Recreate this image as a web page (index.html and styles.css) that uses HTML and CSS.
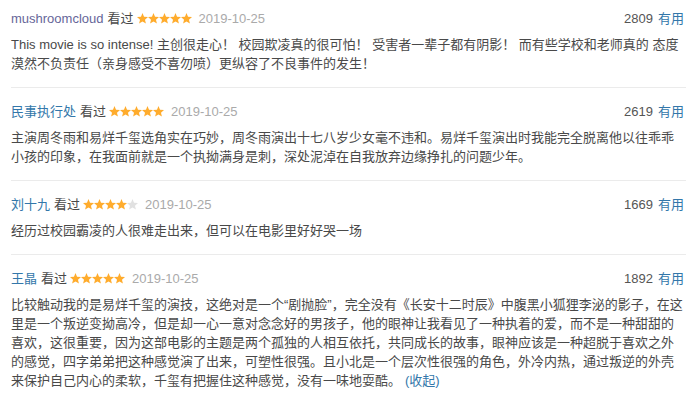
FILE: index.html
```html
<!DOCTYPE html>
<html lang="zh-CN">
<head>
<meta charset="utf-8">
<title>短评</title>
<link rel="stylesheet" href="styles.css">
</head>
<body>
<div class="comments">
  <div class="comment">
    <div class="head">
      <div class="info">
        <a class="user visited" href="#">mushroomcloud</a>
        <span class="watched">看过</span>
        <svg class="stars" width="55" height="11" viewBox="0 0 55 11">
          <polygon class="on" points="5.5,0.1 7.03,3.8 11,4.11 7.97,6.7 8.91,10.59 5.5,8.5 2.09,10.59 3.03,6.7 0,4.11 3.97,3.8"/>
          <polygon class="on" transform="translate(11 0)" points="5.5,0.1 7.03,3.8 11,4.11 7.97,6.7 8.91,10.59 5.5,8.5 2.09,10.59 3.03,6.7 0,4.11 3.97,3.8"/>
          <polygon class="on" transform="translate(22 0)" points="5.5,0.1 7.03,3.8 11,4.11 7.97,6.7 8.91,10.59 5.5,8.5 2.09,10.59 3.03,6.7 0,4.11 3.97,3.8"/>
          <polygon class="on" transform="translate(33 0)" points="5.5,0.1 7.03,3.8 11,4.11 7.97,6.7 8.91,10.59 5.5,8.5 2.09,10.59 3.03,6.7 0,4.11 3.97,3.8"/>
          <polygon class="on" transform="translate(44 0)" points="5.5,0.1 7.03,3.8 11,4.11 7.97,6.7 8.91,10.59 5.5,8.5 2.09,10.59 3.03,6.7 0,4.11 3.97,3.8"/>
        </svg>
        <span class="time">2019-10-25</span>
      </div>
      <div class="votes"><span class="count">2809</span><a class="useful" href="#">有用</a></div>
    </div>
    <p class="text">This movie is so intense! 主创很走心！ 校园欺凌真的很可怕！ 受害者一辈子都有阴影！ 而有些学校和老师真的 态度漠然不负责任（亲身感受不喜勿喷）更纵容了不良事件的发生！</p>
  </div>

  <div class="comment">
    <div class="head">
      <div class="info">
        <a class="user" href="#">民事执行处</a>
        <span class="watched">看过</span>
        <svg class="stars" width="55" height="11" viewBox="0 0 55 11">
          <polygon class="on" points="5.5,0.1 7.03,3.8 11,4.11 7.97,6.7 8.91,10.59 5.5,8.5 2.09,10.59 3.03,6.7 0,4.11 3.97,3.8"/>
          <polygon class="on" transform="translate(11 0)" points="5.5,0.1 7.03,3.8 11,4.11 7.97,6.7 8.91,10.59 5.5,8.5 2.09,10.59 3.03,6.7 0,4.11 3.97,3.8"/>
          <polygon class="on" transform="translate(22 0)" points="5.5,0.1 7.03,3.8 11,4.11 7.97,6.7 8.91,10.59 5.5,8.5 2.09,10.59 3.03,6.7 0,4.11 3.97,3.8"/>
          <polygon class="on" transform="translate(33 0)" points="5.5,0.1 7.03,3.8 11,4.11 7.97,6.7 8.91,10.59 5.5,8.5 2.09,10.59 3.03,6.7 0,4.11 3.97,3.8"/>
          <polygon class="on" transform="translate(44 0)" points="5.5,0.1 7.03,3.8 11,4.11 7.97,6.7 8.91,10.59 5.5,8.5 2.09,10.59 3.03,6.7 0,4.11 3.97,3.8"/>
        </svg>
        <span class="time">2019-10-25</span>
      </div>
      <div class="votes"><span class="count">2619</span><a class="useful" href="#">有用</a></div>
    </div>
    <p class="text">主演周冬雨和易烊千玺选角实在巧妙，周冬雨演出十七八岁少女毫不违和。易烊千玺演出时我能完全脱离他以往乖乖小孩的印象，在我面前就是一个执拗满身是刺，深处泥淖在自我放弃边缘挣扎的问题少年。</p>
  </div>

  <div class="comment">
    <div class="head">
      <div class="info">
        <a class="user" href="#">刘十九</a>
        <span class="watched">看过</span>
        <svg class="stars" width="55" height="11" viewBox="0 0 55 11">
          <polygon class="on" points="5.5,0.1 7.03,3.8 11,4.11 7.97,6.7 8.91,10.59 5.5,8.5 2.09,10.59 3.03,6.7 0,4.11 3.97,3.8"/>
          <polygon class="on" transform="translate(11 0)" points="5.5,0.1 7.03,3.8 11,4.11 7.97,6.7 8.91,10.59 5.5,8.5 2.09,10.59 3.03,6.7 0,4.11 3.97,3.8"/>
          <polygon class="on" transform="translate(22 0)" points="5.5,0.1 7.03,3.8 11,4.11 7.97,6.7 8.91,10.59 5.5,8.5 2.09,10.59 3.03,6.7 0,4.11 3.97,3.8"/>
          <polygon class="on" transform="translate(33 0)" points="5.5,0.1 7.03,3.8 11,4.11 7.97,6.7 8.91,10.59 5.5,8.5 2.09,10.59 3.03,6.7 0,4.11 3.97,3.8"/>
          <polygon class="off" transform="translate(44 0)" points="5.5,0.1 7.03,3.8 11,4.11 7.97,6.7 8.91,10.59 5.5,8.5 2.09,10.59 3.03,6.7 0,4.11 3.97,3.8"/>
        </svg>
        <span class="time">2019-10-25</span>
      </div>
      <div class="votes"><span class="count">1669</span><a class="useful" href="#">有用</a></div>
    </div>
    <p class="text">经历过校园霸凌的人很难走出来，但可以在电影里好好哭一场</p>
  </div>

  <div class="comment">
    <div class="head">
      <div class="info">
        <a class="user" href="#">王晶</a>
        <span class="watched">看过</span>
        <svg class="stars" width="55" height="11" viewBox="0 0 55 11">
          <polygon class="on" points="5.5,0.1 7.03,3.8 11,4.11 7.97,6.7 8.91,10.59 5.5,8.5 2.09,10.59 3.03,6.7 0,4.11 3.97,3.8"/>
          <polygon class="on" transform="translate(11 0)" points="5.5,0.1 7.03,3.8 11,4.11 7.97,6.7 8.91,10.59 5.5,8.5 2.09,10.59 3.03,6.7 0,4.11 3.97,3.8"/>
          <polygon class="on" transform="translate(22 0)" points="5.5,0.1 7.03,3.8 11,4.11 7.97,6.7 8.91,10.59 5.5,8.5 2.09,10.59 3.03,6.7 0,4.11 3.97,3.8"/>
          <polygon class="on" transform="translate(33 0)" points="5.5,0.1 7.03,3.8 11,4.11 7.97,6.7 8.91,10.59 5.5,8.5 2.09,10.59 3.03,6.7 0,4.11 3.97,3.8"/>
          <polygon class="on" transform="translate(44 0)" points="5.5,0.1 7.03,3.8 11,4.11 7.97,6.7 8.91,10.59 5.5,8.5 2.09,10.59 3.03,6.7 0,4.11 3.97,3.8"/>
        </svg>
        <span class="time">2019-10-25</span>
      </div>
      <div class="votes"><span class="count">1892</span><a class="useful" href="#">有用</a></div>
    </div>
    <p class="text">比较触动我的是易烊千玺的演技，这绝对是一个“剧抛脸”，完全没有《长安十二时辰》中腹黑小狐狸李泌的影子，在这里是一个叛逆变拗高冷，但是却一心一意对念念好的男孩子，他的眼神让我看见了一种执着的爱，而不是一种甜甜的喜欢，这很重要，因为这部电影的主题是两个孤独的人相互依托，共同成长的故事，眼神应该是一种超脱于喜欢之外的感觉，四字弟弟把这种感觉演了出来，可塑性很强。且小北是一个层次性很强的角色，外冷内热，通过叛逆的外壳来保护自己内心的柔软，千玺有把握住这种感觉，没有一味地耍酷。<a class="fold" href="#">(收起)</a></p>
  </div>
</div>
</body>
</html>
```

FILE: styles.css
```css
html, body {
  margin: 0;
  padding: 0;
  background: #fff;
}

body {
  font-family: "Liberation Sans", Arial, "Noto Sans CJK SC", sans-serif;
  font-size: 13px;
  color: #494949;
}

a {
  text-decoration: none;
  color: #37a;
}

.comments {
  width: 675px;
  margin-left: 11px;
}

.comment {
  padding: 14px 0;
  border-bottom: 1px solid #ebebeb;
}

.comment:first-child {
  padding-top: 9px;
}

.comment:last-child {
  border-bottom: none;
}

.head {
  display: flex;
  justify-content: space-between;
  align-items: center;
  height: 20px;
  line-height: 20px;
}

.info {
  display: flex;
  align-items: center;
}

.user {
  color: #37a;
  margin-right: 4px;
}

.user.visited {
  color: #669;
}

.watched {
  color: #494949;
  margin-right: 3px;
}

.stars {
  display: block;
  margin-right: 7px;
  margin-top: -1px;
}

.stars .on {
  fill: #ffac2d;
}

.stars .off {
  fill: #e1e1e1;
}

.time {
  color: #aaa;
}

.votes {
  padding-right: 2px;
}

.count {
  color: #555;
  margin-right: 5px;
}

.useful {
  color: #37a;
}

.text {
  margin: 6px 0 0;
  line-height: 19px;
  text-spacing-trim: space-all;
}

.fold {
  color: #37a;
  margin-left: 4px;
}
```
